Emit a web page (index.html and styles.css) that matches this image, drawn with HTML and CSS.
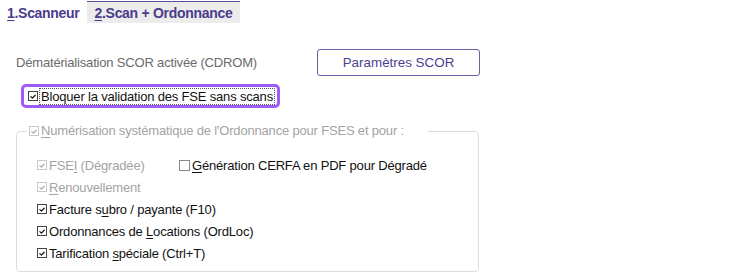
FILE: index.html
```html
<!DOCTYPE html>
<html lang="fr">
<head>
<meta charset="utf-8">
<title>Scanneur</title>
<link rel="stylesheet" href="styles.css">
</head>
<body>
<div class="tabs">
  <div class="tab"><u>1</u>.Scanneur</div>
  <div class="tab tab-active"><u>2</u>.Scan + Ordonnance</div>
</div>
<div class="content">
  <div class="scor-row">
    <span class="muted">Dématérialisation SCOR activée (CDROM)</span>
    <button class="btn">Paramètres SCOR</button>
  </div>
  <div class="focus-wrap">
    <div class="focus-box">
      <span class="cb checked"><svg viewBox="0 0 10 10"><path d="M2.3 5.2 L4.3 7 L7.7 3.4"/></svg></span>
      <span class="focus-label">Bloquer la validation des FSE sans scans</span>
    </div>
  </div>
  <fieldset class="group">
    <legend class="legend">
      <span class="cb checked disabled"><svg viewBox="0 0 10 10"><path d="M2.3 5.2 L4.3 7 L7.7 3.4"/></svg></span>
      <span class="dim"><u>N</u>umérisation systématique de l'Ordonnance pour FSES et pour :</span>
    </legend>
    <div class="item">
      <span class="cb checked disabled"><svg viewBox="0 0 10 10"><path d="M2.3 5.2 L4.3 7 L7.7 3.4"/></svg></span>
      <span class="dim fsei">FSE<u>I</u> (Dégradée)</span>
      <span class="cb unchecked"></span>
      <span><u>G</u>énération CERFA en PDF pour Dégradé</span>
    </div>
    <div class="item">
      <span class="cb checked disabled"><svg viewBox="0 0 10 10"><path d="M2.3 5.2 L4.3 7 L7.7 3.4"/></svg></span>
      <span class="dim"><u>R</u>enouvellement</span>
    </div>
    <div class="item">
      <span class="cb checked"><svg viewBox="0 0 10 10"><path d="M2.3 5.2 L4.3 7 L7.7 3.4"/></svg></span>
      <span>Facture s<u>u</u>bro / payante (F10)</span>
    </div>
    <div class="item">
      <span class="cb checked"><svg viewBox="0 0 10 10"><path d="M2.3 5.2 L4.3 7 L7.7 3.4"/></svg></span>
      <span>Ordonnances de <u>L</u>ocations (OrdLoc)</span>
    </div>
    <div class="item">
      <span class="cb checked"><svg viewBox="0 0 10 10"><path d="M2.3 5.2 L4.3 7 L7.7 3.4"/></svg></span>
      <span>Tarification <u>s</u>péciale (Ctrl+T)</span>
    </div>
  </fieldset>
</div>
</body>
</html>
```
FILE: styles.css
```css
* { box-sizing: border-box; }
html, body { margin: 0; padding: 0; background: #fff; }
body {
  font-family: "Liberation Sans", Arial, sans-serif;
  font-size: 13px;
  letter-spacing: -0.18px;
  color: #111;
  width: 754px;
  height: 276px;
  overflow: hidden;
}
u { text-underline-offset: 2px; }
.tabs {
  display: flex;
  height: 24px;
  align-items: stretch;
}
.tab {
  font-weight: bold;
  font-size: 14px;
  letter-spacing: -0.3px;
  color: #4a3b8c;
  display: flex;
  align-items: center;
  padding: 1px 7px 0 7px;
}
.tab-active {
  background: #ececec;
  border-top: 1px solid #5a4a9a;
  margin-top: 1px;
  height: 22px;
  padding: 0 8px 0 8px;
}
.content {
  padding-left: 16px;
  display: flex;
  flex-direction: column;
}
.scor-row {
  display: grid;
  grid-template-columns: 301px 163px;
  align-items: center;
  margin-top: 25px;
  height: 27px;
}
.muted { color: #6a6a6a; }
.btn {
  font: inherit;
  font-size: 13.4px;
  color: #4e3f90;
  background: #fff;
  border: 1px solid #6e5fa8;
  border-radius: 3px;
  height: 27px;
  width: 163px;
  padding: 0;
}
.focus-wrap {
  margin-top: 8px;
  padding-left: 5px;
  display: flex;
}
.focus-box {
  display: inline-flex;
  align-items: center;
  height: 24px;
  border: 3px solid #a05af5;
  border-radius: 5px;
  padding: 0 3px 0 4px;
  gap: 2px;
}
.focus-label {
  outline: 1px dotted #555;
  outline-offset: 0;
  line-height: 15px;
  padding: 0 1px;
}
.cb {
  width: 10px;
  height: 10px;
  border: 1px solid #444;
  background: #fff;
  display: inline-flex;
  align-items: center;
  justify-content: center;
  flex: none;
}
.cb svg { width: 9px; height: 9px; display: block; }
.cb svg path { fill: none; stroke: #111; stroke-width: 1.5; stroke-linecap: round; stroke-linejoin: round; }
.cb.disabled { border-color: #c8c8c8; }
.cb.disabled svg path { stroke: #a8a8a8; }
.cb.unchecked { border-color: #888; width: 11px; height: 11px; }
.dim { color: #a3a3a3; }
.group {
  margin: 15px 0 0 0;
  width: 463px;
  border: 1px solid #dcdcdc;
  border-radius: 4px;
  padding: 15px 10px 7px 20px;
}
.legend {
  margin-left: -10px;
  padding: 0 24px 0 2px;
  line-height: 16px;
  display: flex;
  align-items: center;
  gap: 2px;
}
.item {
  height: 22px;
  display: flex;
  align-items: center;
  gap: 2px;
}
.fsei { width: 128px; }
```
